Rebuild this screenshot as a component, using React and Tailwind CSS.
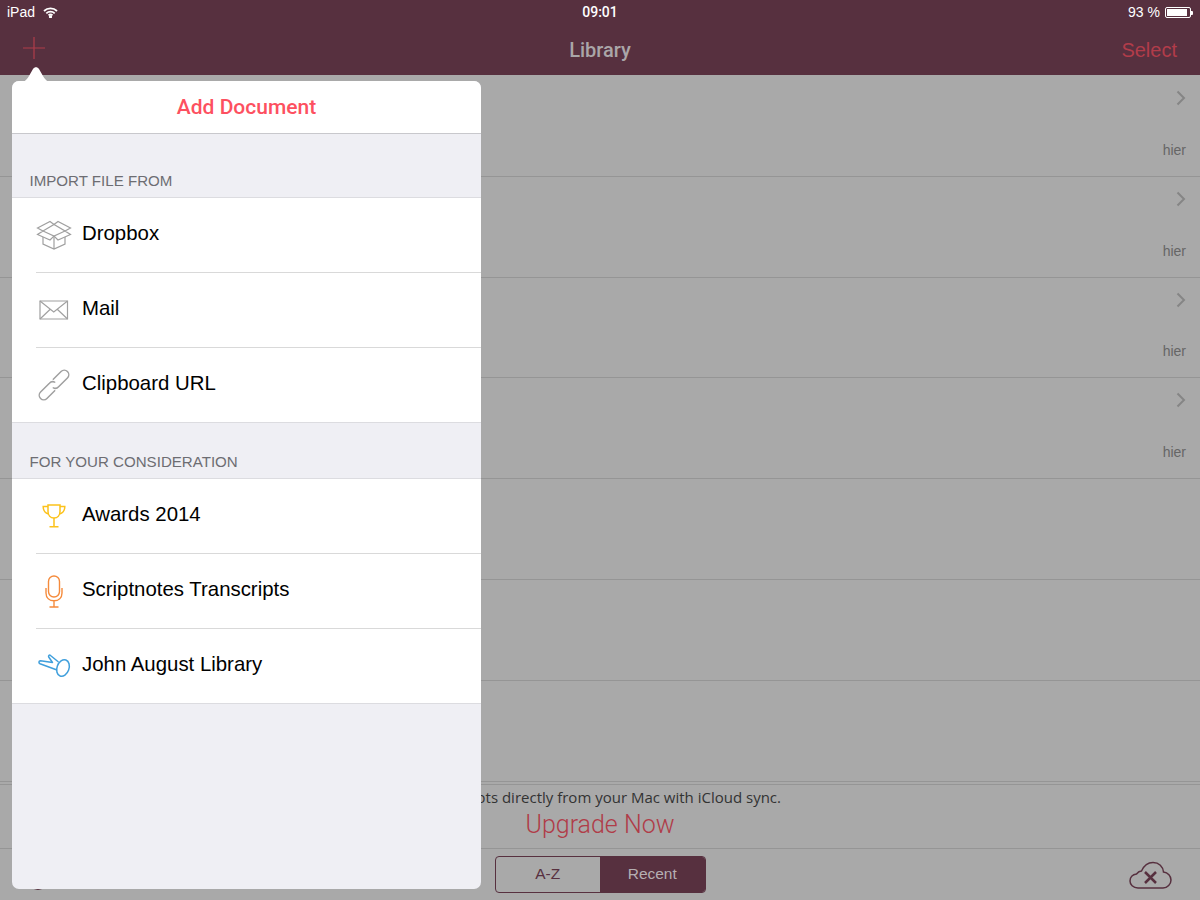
import React from 'react';

const sans = { fontFamily: '"Liberation Sans", Arial, sans-serif' };
const roboto = { fontFamily: '"Roboto", sans-serif' };

function LibraryRow({ showMeta }) {
  return (
    <div className="relative h-[100.8px] border-b border-[#959595]">
      {showMeta && (
        <div className="flex h-full flex-col items-end justify-between pt-[14px] pb-[18px] pr-[14px]">
          <svg width="10" height="16" viewBox="0 0 10 16" fill="none" stroke="#858585" strokeWidth="2">
            <path d="M1.5 1.5 8 8l-6.500 6.500" />
          </svg>
          <span className="text-[14px] leading-4 text-[#666666]">hier</span>
        </div>
      )}
    </div>
  );
}

function DropboxIcon() {
  return (
    <svg width="36" height="32" viewBox="0 0 36 32" fill="none" stroke="#a0a0a0" strokeWidth="1.200">
      <path d="M1.500 9 14 2.500l4 3 4-3L34.500 9 29 12l5.500 3.500L22 21l-4-4-4 4-12.500-5.500L7 12z" />
      <path d="M7 12 18 5.500 29 12 18 17z" />
      <path d="M7 18v7l11 5 11-5v-7M18 17v13" />
    </svg>
  );
}

function MailIcon() {
  return (
    <svg width="30" height="20" viewBox="0 0 30 20" fill="none" stroke="#a0a0a0" strokeWidth="1.200">
      <path d="M1 1h27.500v18H1z" />
      <path d="M1 1l13.750 11L28.500 1M1 19l10.500-10M28.500 19 18 9" />
    </svg>
  );
}

function LinkIcon() {
  return (
    <svg width="36" height="36" viewBox="-18 -18 36 36" fill="none" stroke="#a0a0a0" strokeWidth="1.500" strokeLinecap="round">
      <g transform="rotate(-45)">
        <path d="M3.500-4.500H14.500A4.500 4.500 0 0 1 14.500 4.500H2A4.500 4.500 0 0 1-2.500 1.500" />
        <path d="M-3.500 4.500H-14.500A4.500 4.500 0 0 1-14.500-4.500H-2A4.500 4.500 0 0 1 2.500-1.500" />
      </g>
    </svg>
  );
}

function TrophyIcon() {
  return (
    <svg width="24" height="24" viewBox="0 0 24 24" fill="none" stroke="#fcc21b" strokeWidth="1.500">
      <path d="M6 1h12v6.500c0 4-2.500 6.500-6 6.500s-6-2.500-6-6.500z" />
      <path d="M6 2.500H1.200c0 4 1.600 6.500 5.300 7.500M18 2.500h4.800c0 4-1.600 6.500-5.300 7.500" />
      <path d="M12 14v8.500M7.500 22.800h9" />
    </svg>
  );
}

function MicIcon() {
  return (
    <svg width="18" height="33" viewBox="0 0 18 33" fill="none" stroke="#f58b3c" strokeWidth="1.400">
      <rect x="3.500" y="1" width="11" height="21" rx="5.500" />
      <path d="M1 13v5c0 5 3.500 7.800 8 7.800s8-2.800 8-7.800v-5M9 26v6M4.500 32h9" />
    </svg>
  );
}

function CometIcon() {
  return (
    <svg width="34" height="26" viewBox="7 8 34 26" fill="none" stroke="#3f9fdc" strokeWidth="1.500" strokeLinejoin="round">
      <ellipse cx="33" cy="23" rx="6" ry="8.500" transform="rotate(20 33 23)" />
      <path d="M28.500 17 20.500 10.500C19.500 9.500 18 10.500 18.700 12L22.500 17.500 10.500 15.800C8.500 15.800 8.500 18 10 18.700L27 25" />
    </svg>
  );
}

function MenuRow({ icon, label, last, height = 'h-[75px]' }) {
  return (
    <div className={`flex ${height} items-stretch pl-6`}>
      <div className={`flex flex-1 items-center ${last ? '' : 'border-b border-[#d9d9d9]'}`}>
        <div className="flex w-[36px] justify-center">{icon}</div>
        <span className="mb-[4px] ml-[10px] text-[20.4px] leading-6 text-black">{label}</span>
      </div>
    </div>
  );
}

function SectionHeader({ children, className }) {
  return (
    <div className={`flex items-end border-b border-[#dcdce0] px-[17.500px] text-[15.100px] leading-[18px] text-[#6d6d72] ${className}`}>
      {children}
    </div>
  );
}

function AddDocumentPopover() {
  return (
    <div className="absolute left-[12px] top-[81px] flex h-[808px] w-[469px] flex-col rounded-[7px] bg-[#efeff4]">
      <svg className="absolute left-[2px] top-[-15px]" width="40" height="16" viewBox="0 0 40 16" fill="white">
        <path d="M6 16c4 0 6-1 9-6l4-7c1.500-2.500 4.500-2.500 6 0l4 7c3 5 5 6 9 6z" />
      </svg>
      <div className="flex h-[53px] items-center justify-center rounded-t-[7px] border-b border-[#c8c8cc] bg-white pt-[1px] text-[21px] font-medium text-[#fd5060]" style={roboto}>
        Add Document
      </div>
      <SectionHeader className="h-[64px] pb-[7px]">IMPORT FILE FROM</SectionHeader>
      <div className="border-b border-[#dcdce0] bg-white">
        <MenuRow icon={<DropboxIcon />} label="Dropbox" />
        <MenuRow icon={<MailIcon />} label="Mail" />
        <MenuRow icon={<LinkIcon />} label="Clipboard URL" last height="h-[74px]" />
      </div>
      <SectionHeader className="h-[56px] pb-[7px]">FOR YOUR CONSIDERATION</SectionHeader>
      <div className="border-b border-[#dcdce0] bg-white">
        <MenuRow icon={<TrophyIcon />} label="Awards 2014" />
        <MenuRow icon={<MicIcon />} label="Scriptnotes Transcripts" />
        <MenuRow icon={<CometIcon />} label="John August Library" last height="h-[74px]" />
      </div>
    </div>
  );
}

export default function App() {
  return (
    <div className="relative flex h-[900px] w-[1200px] flex-col overflow-hidden bg-[#a9a9a9]" style={sans}>
      {/* Status bar */}
      <div className="bg-[#57303f]">
        <div className="flex h-[25px] items-center justify-between px-[7px] text-[14px] text-white">
          <div className="flex flex-1 items-center gap-[8px]">
            <span>iPad</span>
            <svg width="15" height="11" viewBox="0 0 15 11" fill="none" stroke="white" strokeWidth="1.800">
              <path d="M1 4a9.500 9.500 0 0 1 13 0M3.300 6.300a6.200 6.200 0 0 1 8.400 0M5.500 8.400a3 3 0 0 1 4 0" />
              <circle cx="7.500" cy="9.800" r="0.700" fill="white" />
            </svg>
          </div>
          <span className="font-medium" style={roboto}>09:01</span>
          <div className="flex flex-1 items-center justify-end gap-[5px]">
            <span>93 %</span>
            <div className="flex items-center">
              <div className="h-[11px] w-[26px] rounded-[2px] border border-white p-[1px]">
                <div className="h-full w-[93%] bg-white" />
              </div>
              <div className="h-[4px] w-[2px] rounded-r-[1px] bg-white" />
            </div>
          </div>
        </div>
        {/* Nav bar */}
        <div className="flex h-[50px] items-center px-[23px]">
          <div className="flex-1">
            <svg className="mb-[4px]" width="22" height="22" viewBox="0 0 22 22" stroke="#b03c4a" strokeWidth="1.200">
              <path d="M11 0v22M0 11h22" />
            </svg>
          </div>
          <span className="text-[20px] font-medium text-[#aaa6a8]" style={roboto}>Library</span>
          <div className="flex-1 text-right text-[20px] text-[#b23c4a]">Select</div>
        </div>
      </div>

      {/* Document rows */}
      <div className="flex-1 pt-[1px]">
        <LibraryRow showMeta />
        <LibraryRow showMeta />
        <LibraryRow showMeta />
        <LibraryRow showMeta />
        <LibraryRow />
        <LibraryRow />
        <LibraryRow />
      </div>

      {/* Upgrade banner */}
      <div className="flex h-[65px] flex-col items-center border-y border-[#959595]">
        <div className="mt-[3px] w-full pr-[419px] text-right text-[15px] leading-[18px] text-[#333333]" style={{ fontFamily: '"Open Sans", sans-serif', fontStretch: '90%' }}>
          pts directly from your Mac with iCloud sync.
        </div>
        <div className="mt-[4px] text-[25px] font-light leading-[30px] text-[#b03c48]" style={roboto}>Upgrade Now</div>
      </div>

      {/* Toolbar */}
      <div className="flex h-[51px] items-center px-[28px]">
        <div className="flex-1">
          <div className="mt-[11px] h-[20px] w-[20px] rounded-full border-2 border-[#57303f]" />
        </div>
        <div className="mb-[1px] flex h-[37px] w-[211px] overflow-hidden rounded-[4px] border border-[#57303f] text-[15.500px]">
          <div className="flex flex-1 items-center justify-center text-[#57303f]">A-Z</div>
          <div className="flex flex-1 items-center justify-center bg-[#57303f] text-[#b5afb2]">Recent</div>
        </div>
        <div className="flex flex-1 justify-end">
          <svg width="43" height="28" viewBox="0 0 43 28" fill="none" stroke="#57303f">
            <path strokeWidth="1.500" d="M9 27C4 27 1 23.500 1 20s2.500-6.500 6.500-7C9 11 10.500 10 12.500 10 15 4.500 19 1.500 24 1.500c6 0 10 4 10.500 9.500 4.500.5 7.500 4 7.500 8s-3.500 8-8 8z" />
            <path strokeWidth="2.500" d="m16 11 11 11M27 11 16 22" />
          </svg>
        </div>
      </div>

      <AddDocumentPopover />
    </div>
  );
}
